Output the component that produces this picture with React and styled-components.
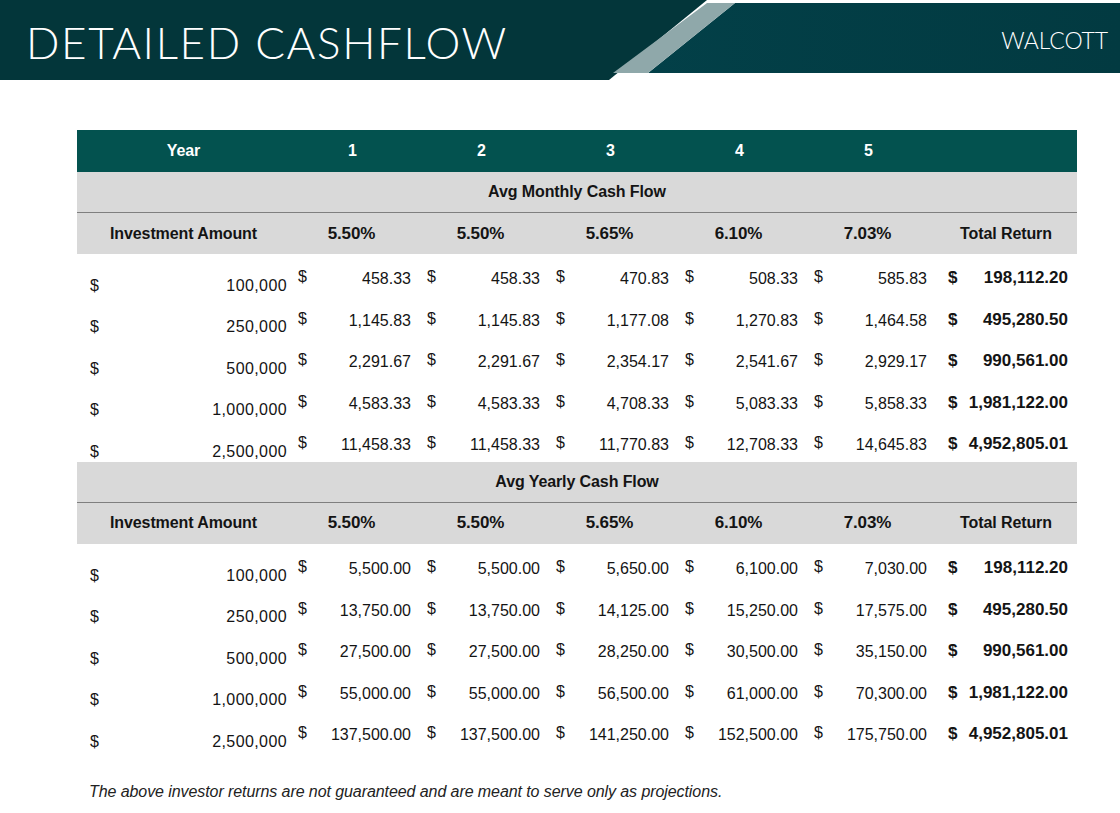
import React from "react";
import styled, { createGlobalStyle } from "styled-components";

const Global = createGlobalStyle`
  html, body { margin: 0; padding: 0; background: #ffffff; }
  body { font-family: "Liberation Sans", Arial, sans-serif; color: #141414; }
`;

const Page = styled.div`
  width: 1120px;
  height: 813px;
  overflow: hidden;
  display: flex;
  flex-direction: column;
`;

const Header = styled.header`
  display: grid;
  height: 80px;
  isolation: isolate;
  & > * { grid-area: 1 / 1; }
`;

const DarkPanel = styled.div`
  background: #03363a;
  clip-path: polygon(0 0, 707px 0, 609px 80px, 0 80px);
`;

const Stripe = styled.div`
  background: #8fa8aa;
  clip-path: polygon(707px 3px, 735px 3px, 648px 73px, 613px 73px);
`;

const RightPanel = styled.div`
  background: linear-gradient(90deg, #023d45 0%, #03434c 35%, #023a41 100%);
  clip-path: polygon(735px 3px, 100% 3px, 100% 73px, 648px 73px);
`;

const HeaderContent = styled.div`
  position: relative;
  z-index: 1;
  display: flex;
  align-items: center;
  justify-content: space-between;
  padding: 4px 12px 0 27px;
  color: #ffffff;
  font-family: "Lato", "Open Sans", sans-serif;
  font-weight: 300;
`;

const Title = styled.h1`
  margin: 0 0 0 -1px;
  font-size: 44px;
  font-weight: 300;
  letter-spacing: 1.6px;
  line-height: 1;
`;

const Brand = styled.div`
  font-size: 23px;
  font-weight: 300;
  letter-spacing: -0.1px;
  margin-top: -4px;
`;

const Table = styled.div`
  width: 1000px;
  margin: 50px 0 0 77px;
  display: flex;
  flex-direction: column;
`;

const Row = styled.div`
  display: grid;
  grid-template-columns: 213px repeat(5, 129px) 142px;
  height: ${(p) => p.$h}px;
  background: ${(p) => p.$bg || "transparent"};
  color: ${(p) => p.$color || "#141414"};
`;

const HeadCell = styled.div`
  display: flex;
  align-items: center;
  justify-content: center;
  font-weight: 700;
  font-size: ${(p) => p.$size || 16}px;
  letter-spacing: -0.1px;
  padding-right: ${(p) => p.$shift || 0}px;
`;

const SectionTitle = styled.div`
  height: 40px;
  background: #d9d9d9;
  border-bottom: 1px solid #7f7f7f;
  display: flex;
  align-items: center;
  justify-content: center;
  font-weight: 700;
  font-size: 16px;
  letter-spacing: -0.1px;
`;

const InvCell = styled.div`
  display: flex;
  justify-content: space-between;
  align-items: flex-end;
  padding: 0 3px 1px 13px;
  font-size: 16px;
  line-height: 18px;
  letter-spacing: 0.4px;
`;

const MoneyCell = styled.div`
  display: flex;
  justify-content: space-between;
  align-items: flex-start;
  padding: ${(p) => (p.$total ? 15 : 16)}px ${(p) => (p.$total ? 9 : 8)}px 0 ${(p) => (p.$total ? 13 : 8)}px;
  font-size: ${(p) => (p.$total ? 17 : 16)}px;
  line-height: 18px;
  font-weight: ${(p) => (p.$total ? 700 : 400)};
`;

const Sign = styled.span`
  position: relative;
  top: ${(p) => (p.$raised ? -2 : 0)}px;
`;

const Note = styled.p`
  margin: 31px 0 0 89px;
  font-style: italic;
  font-size: 16px;
  color: #222;
  letter-spacing: -0.08px;
`;

const amounts = ["100,000", "250,000", "500,000", "1,000,000", "2,500,000"];

const monthly = [
  ["458.33", "458.33", "470.83", "508.33", "585.83", "198,112.20"],
  ["1,145.83", "1,145.83", "1,177.08", "1,270.83", "1,464.58", "495,280.50"],
  ["2,291.67", "2,291.67", "2,354.17", "2,541.67", "2,929.17", "990,561.00"],
  ["4,583.33", "4,583.33", "4,708.33", "5,083.33", "5,858.33", "1,981,122.00"],
  ["11,458.33", "11,458.33", "11,770.83", "12,708.33", "14,645.83", "4,952,805.01"],
];

const yearly = [
  ["5,500.00", "5,500.00", "5,650.00", "6,100.00", "7,030.00", "198,112.20"],
  ["13,750.00", "13,750.00", "14,125.00", "15,250.00", "17,575.00", "495,280.50"],
  ["27,500.00", "27,500.00", "28,250.00", "30,500.00", "35,150.00", "990,561.00"],
  ["55,000.00", "55,000.00", "56,500.00", "61,000.00", "70,300.00", "1,981,122.00"],
  ["137,500.00", "137,500.00", "141,250.00", "152,500.00", "175,750.00", "4,952,805.01"],
];

const rates = ["5.50%", "5.50%", "5.65%", "6.10%", "7.03%"];

function Section({ title, data }) {
  return (
    <>
      <SectionTitle>{title}</SectionTitle>
      <Row $h={41} $bg="#d9d9d9">
        <HeadCell>Investment Amount</HeadCell>
        {rates.map((r, i) => (
          <HeadCell key={i} $shift={6} $size={17}>{r}</HeadCell>
        ))}
        <HeadCell>Total Return</HeadCell>
      </Row>
      {data.map((vals, r) => (
        <Row key={r} $h={41.6}>
          <InvCell>
            <span>$</span>
            <span>{amounts[r]}</span>
          </InvCell>
          {vals.map((v, i) => (
            <MoneyCell key={i} $total={i === 5}>
              <Sign $raised={i !== 5}>$</Sign>
              <span>{v}</span>
            </MoneyCell>
          ))}
        </Row>
      ))}
    </>
  );
}

export default function App() {
  return (
    <Page>
      <Global />
      <Header>
        <RightPanel />
        <DarkPanel />
        <Stripe />
        <HeaderContent>
          <Title>DETAILED CASHFLOW</Title>
          <Brand>WALCOTT</Brand>
        </HeaderContent>
      </Header>
      <Table>
        <Row $h={42} $bg="#03524f" $color="#ffffff">
          <HeadCell>Year</HeadCell>
          {[1, 2, 3, 4, 5].map((y) => (
            <HeadCell key={y} $shift={4}>{y}</HeadCell>
          ))}
          <HeadCell />
        </Row>
        <Section title="Avg Monthly Cash Flow" data={monthly} />
        <Section title="Avg Yearly Cash Flow" data={yearly} />
      </Table>
      <Note>The above investor returns are not guaranteed and are meant to serve only as projections.</Note>
    </Page>
  );
}
